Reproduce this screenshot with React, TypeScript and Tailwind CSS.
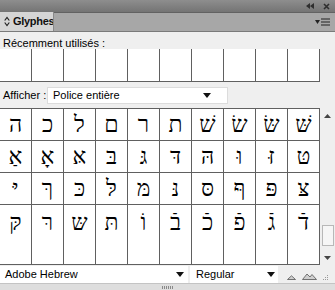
import React from "react";

const row1 = ["ה", "כ", "ל", "ם", "ר", "ת", "שׁ", "שׂ", "שּׂ", "שּׁ"];
const row2 = ["אַ", "אָ", "אּ", "בּ", "גּ", "דּ", "הּ", "וּ", "זּ", "טּ"];
const row3 = ["יּ", "ךּ", "כּ", "לּ", "מּ", "נּ", "סּ", "ףּ", "פּ", "צּ"];
const row4 = ["קּ", "רּ", "שּ", "תּ", "וֹ", "בֿ", "כֿ", "פֿ", "גֿ", "דֿ"];

const ui = { fontFamily: '"Liberation Sans", Arial, sans-serif' };
const heb = { fontFamily: '"Liberation Serif", "DejaVu Serif", serif' };

function Cell({ g, tall }: { g?: string; tall?: boolean }) {
  return (
    <div
      className={`w-[32px] border-r border-b border-[#606060] bg-white flex justify-center ${tall ? "h-[60px] pt-[6px]" : "h-[32px] items-center"}`}
    >
      {g ? (
        <span className="text-[23px] leading-none text-black" style={heb} dir="rtl">
          {g}
        </span>
      ) : null}
    </div>
  );
}

function GlyphRow({ glyphs, tall }: { glyphs: string[]; tall?: boolean }) {
  return (
    <div className="flex">
      {glyphs.map((g, i) => (
        <Cell key={i} g={g} tall={tall} />
      ))}
    </div>
  );
}

export default function App() {
  return (
    <div className="w-[335px] h-[290px] bg-[#efefef] flex flex-col overflow-hidden text-[11px] text-black" style={ui}>
      {/* top bar */}
      <div className="h-[12px] shrink-0 bg-gradient-to-b from-[#8e8e8e] to-[#747474] flex items-center justify-end pr-[5px] gap-[9px]">
        <svg className="shrink-0" width="8" height="6" viewBox="0 0 8 6">
          <path d="M4 0 L0 3 L4 6 Z M8 0 L4 3 L8 6 Z" fill="#2e2e2e" />
        </svg>
        <svg className="shrink-0" width="7" height="7" viewBox="0 0 7 7">
          <path d="M1 1 L6 6 M6 1 L1 6" stroke="#2e2e2e" strokeWidth="1.6" />
        </svg>
      </div>
      {/* tab row */}
      <div className="h-[20px] shrink-0 bg-[#a7a7a7] border-t border-[#626262] border-b border-b-[#7a7a7a] flex items-end justify-between">
        <div className="h-[19px] w-[54px] bg-[#d5d5d5] border-r border-[#8a8a8a] flex items-center pl-[4px] gap-[3px] overflow-hidden">
          <svg className="shrink-0 block" width="6" height="11" viewBox="0 0 6 11">
            <path d="M0.7 4.5 L3 1.5 L5.3 4.5 M0.7 6.5 L3 9.5 L5.3 6.5" stroke="#222" strokeWidth="1.2" fill="none" />
          </svg>
          <span className="font-bold text-[11px] tracking-[-0.3px] text-[#111] whitespace-nowrap">Glyphes</span>
        </div>
        <div className="h-[19px] flex items-center pr-[5px] gap-[1px]">
          <svg className="shrink-0" width="5" height="4" viewBox="0 0 5 4">
            <path d="M0 0 L5 0 L2.5 4 Z" fill="#222" />
          </svg>
          <svg className="shrink-0" width="9" height="8" viewBox="0 0 9 8">
            <path d="M0 1 H9 M0 4 H9 M0 7 H9" stroke="#222" strokeWidth="1.2" />
          </svg>
        </div>
      </div>
      {/* body */}
      <div className="pl-[3px] pt-[6px] h-[17px] shrink-0 leading-none">Récemment utilisés :</div>
      <div className="flex h-[33px] shrink-0">
        {Array.from({ length: 10 }).map((_, i) => (
          <div key={i} className="w-[32px] h-[33px] border-r border-b border-[#606060] bg-white" />
        ))}
      </div>
      <div className="flex items-center h-[20px] shrink-0 mt-[3px] pl-[3px]">
        <span className="w-[44px]">Afficher :</span>
        <div className="w-[181px] h-[17px] bg-white border border-[#dcdcdc] flex items-center justify-between pl-[5px] pr-[16px]">
          <span>Police entière</span>
          <svg className="shrink-0" width="8" height="5" viewBox="0 0 8 5">
            <path d="M0 0 L8 0 L4 5 Z" fill="#111" />
          </svg>
        </div>
      </div>
      <div className="flex mt-[3px] h-[157px] shrink-0 overflow-hidden">
        <div className="flex flex-col border-t border-[#606060] w-[320px]">
          <GlyphRow glyphs={row1} />
          <GlyphRow glyphs={row2} />
          <GlyphRow glyphs={row3} />
          <GlyphRow glyphs={row4} tall />
        </div>
        {/* scrollbar */}
        <div className="w-[15px] flex flex-col items-center pt-[6px] pb-[5px]">
          <svg className="shrink-0" width="7" height="4" viewBox="0 0 7 4">
            <path d="M0 4 L3.5 0 L7 4 Z" fill="#444" />
          </svg>
          <div className="flex-1" />
          <div className="w-[12px] h-[21px] bg-[#f6f6f6] border border-[#b8b8b8] mb-[10px]" />
          <svg className="shrink-0" width="7" height="4" viewBox="0 0 7 4">
            <path d="M0 0 L7 0 L3.5 4 Z" fill="#444" />
          </svg>
        </div>
      </div>
      {/* bottom font row */}
      <div className="h-[18px] shrink-0 flex items-center bg-[#efefef]">
        <div className="w-[188px] h-[17px] bg-white flex items-center justify-between pl-[5px] pr-[4px]">
          <span>Adobe Hebrew</span>
          <svg className="shrink-0" width="8" height="5" viewBox="0 0 8 5">
            <path d="M0 0 L8 0 L4 5 Z" fill="#111" />
          </svg>
        </div>
        <div className="w-[88px] h-[17px] ml-[2px] bg-white flex items-center justify-between pl-[6px] pr-[3px]">
          <span>Regular</span>
          <svg className="shrink-0" width="8" height="5" viewBox="0 0 8 5">
            <path d="M0 0 L8 0 L4 5 Z" fill="#111" />
          </svg>
        </div>
        <div className="flex items-end gap-[6px] ml-[9px] pt-[4px]">
          <svg className="shrink-0" width="9" height="5" viewBox="0 0 9 5">
            <path d="M0.5 4.5 L4.5 0.8 L8.5 4.5 Z" fill="#cfcfcf" stroke="#555" strokeWidth="0.8" />
          </svg>
          <svg className="shrink-0" width="15" height="7" viewBox="0 0 15 7">
            <path d="M0.5 6.5 L5 1 L8 4 L10 1.5 L14.5 6.5 Z" fill="#cfcfcf" stroke="#555" strokeWidth="0.8" />
          </svg>
        </div>
        <svg className="shrink-0 ml-[5px] mt-[8px]" width="7" height="7" viewBox="0 0 7 7">
          <g fill="#9a9a9a">
            <rect x="5" y="0" width="1" height="1" />
            <rect x="3" y="2" width="1" height="1" />
            <rect x="5" y="2" width="1" height="1" />
            <rect x="1" y="4" width="1" height="1" />
            <rect x="3" y="4" width="1" height="1" />
            <rect x="5" y="4" width="1" height="1" />
          </g>
        </svg>
      </div>
      {/* bottom strip */}
      <div className="flex-1 bg-[#dedede] border-t border-[#c4c4c4] flex items-center justify-center">
        <svg className="shrink-0" width="12" height="3" viewBox="0 0 12 3">
          <g fill="#8a8a8a">
            <rect x="0" y="0" width="1" height="3" />
            <rect x="2" y="0" width="1" height="3" />
            <rect x="4" y="0" width="1" height="3" />
            <rect x="6" y="0" width="1" height="3" />
            <rect x="8" y="0" width="1" height="3" />
            <rect x="10" y="0" width="1" height="3" />
          </g>
        </svg>
      </div>
    </div>
  );
}
